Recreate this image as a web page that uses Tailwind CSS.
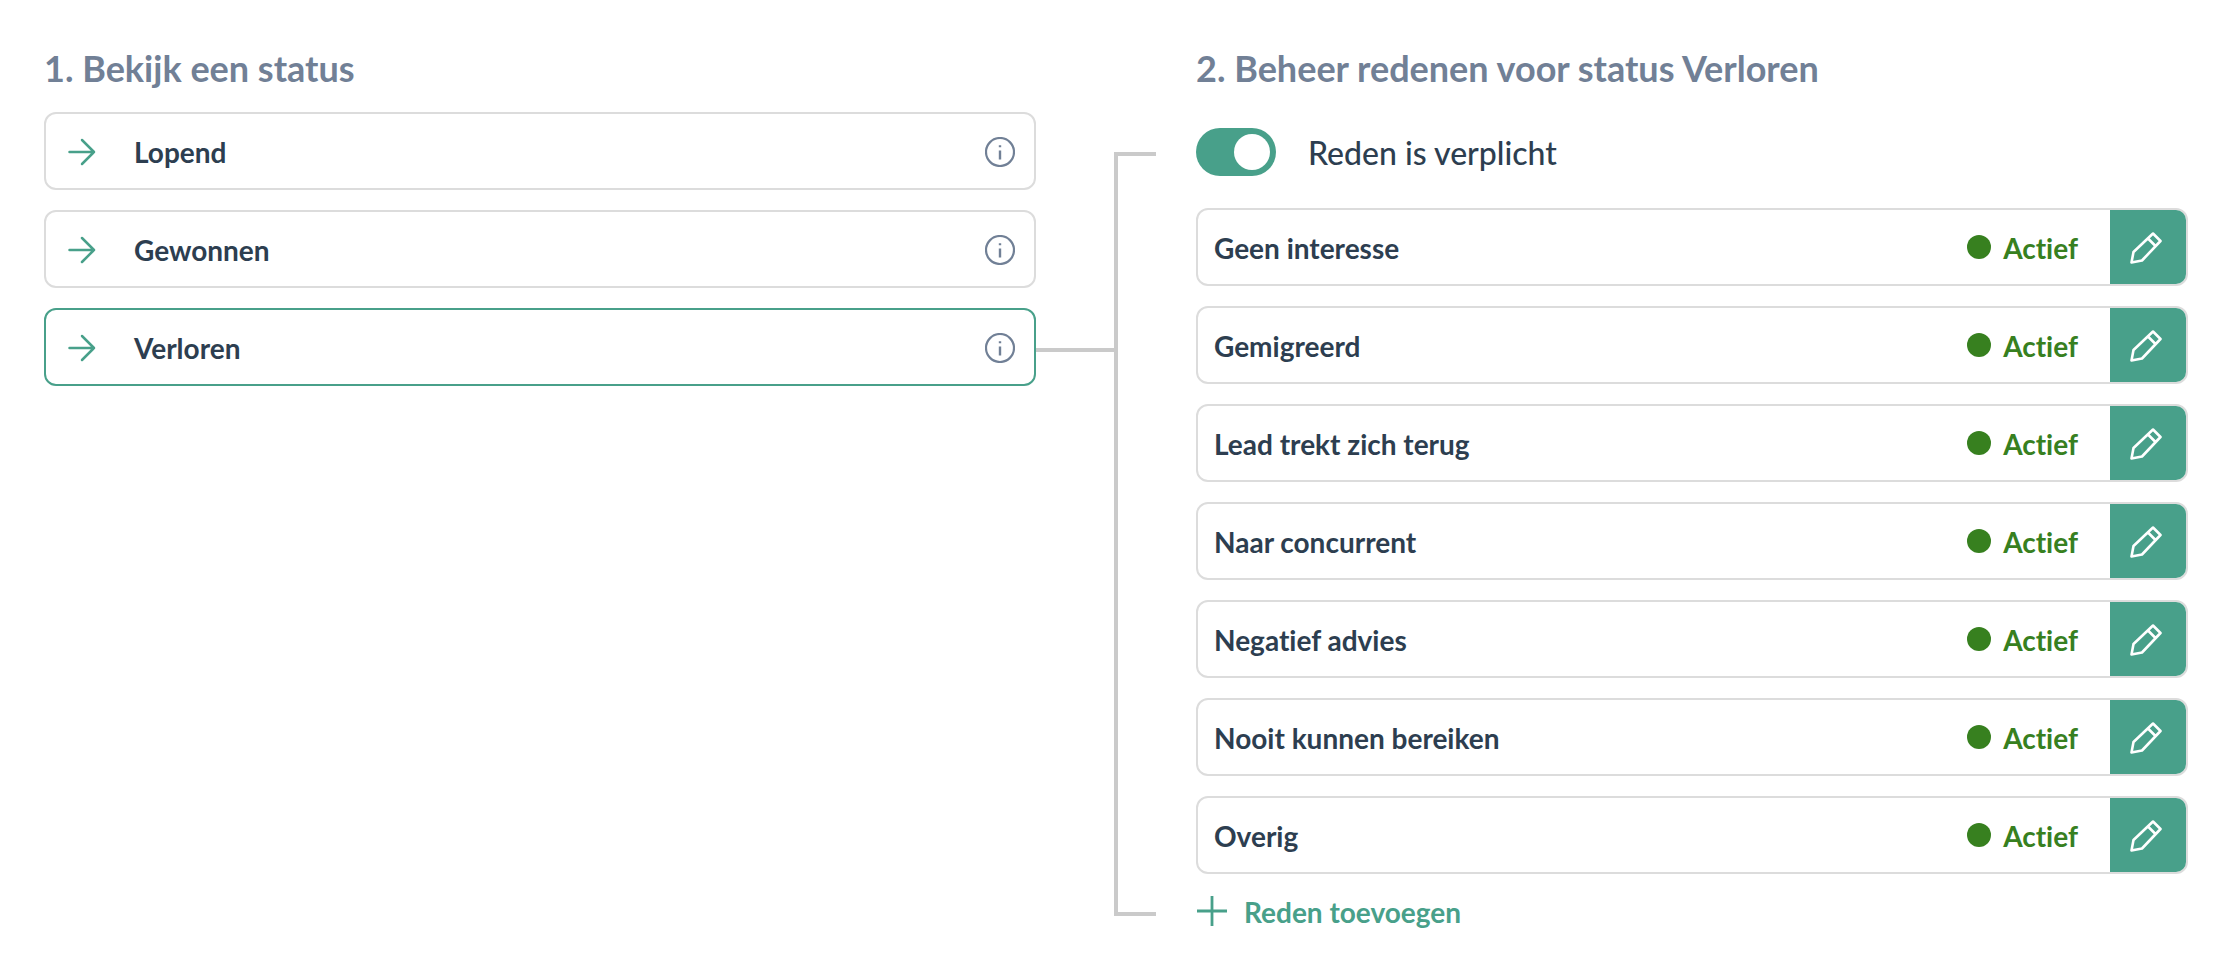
<!DOCTYPE html>
<html lang="nl">
<head>
<meta charset="utf-8">
<meta name="viewport" content="width=device-width, initial-scale=1">
<title>Statussen en redenen</title>
<script src="https://cdn.jsdelivr.net/npm/@tailwindcss/browser@4"></script>
</head>
<body class="bg-white font-[Lato,sans-serif] text-[28px] leading-9 font-bold text-[#2d3e50] [font-variant-ligatures:none]">
<svg class="hidden" aria-hidden="true">
  <symbol id="arrow" viewBox="0 0 28 28"><path d="M1.5 14H26M14 2l12 12-12 12" fill="none" stroke="currentColor" stroke-width="2.5" stroke-linecap="round" stroke-linejoin="round"/></symbol>
  <symbol id="info" viewBox="0 0 30 30"><circle cx="15" cy="15" r="14" fill="none" stroke="currentColor" stroke-width="2.2"/><path d="M15 13.500V22.500M15 8.300v2" fill="none" stroke="currentColor" stroke-width="2.400"/></symbol>
  <symbol id="pencil" viewBox="0 0 32 32"><path d="M1.500 30.500L3.500 20 23 1.500 30.500 9 12 28.500zM18 6.500l7.500 7.500" fill="none" stroke="currentColor" stroke-width="2.600" stroke-linejoin="round"/></symbol>
</svg>
<main class="grid grid-cols-[1fr_160px_1fr] pt-[46px] pl-11 pr-[26px] pb-12">
  <section>
    <h2 class="mb-[22px] text-[36px] leading-11 text-[#718096]">1. Bekijk een status</h2>
    <div class="flex flex-col gap-5">
      <button type="button" class="flex h-[78px] items-center rounded-xl border-2 border-[#dcdcdc] pt-0.5 pl-[22px] pr-[19px] text-left"><svg class="mr-[38px] size-7 text-[#48a08a]"><use href="#arrow"/></svg><span class="flex-1">Lopend</span><svg class="size-[30px] text-[#718096]"><use href="#info"/></svg></button>
      <button type="button" class="flex h-[78px] items-center rounded-xl border-2 border-[#dcdcdc] pt-0.5 pl-[22px] pr-[19px] text-left"><svg class="mr-[38px] size-7 text-[#48a08a]"><use href="#arrow"/></svg><span class="flex-1">Gewonnen</span><svg class="size-[30px] text-[#718096]"><use href="#info"/></svg></button>
      <button type="button" aria-pressed="true" class="flex h-[78px] items-center rounded-xl border-2 border-[#48a08a] pt-0.5 pl-[22px] pr-[19px] text-left"><svg class="mr-[38px] size-7 text-[#48a08a]"><use href="#arrow"/></svg><span class="flex-1">Verloren</span><svg class="size-[30px] text-[#718096]"><use href="#info"/></svg></button>
    </div>
  </section>
  <div class="flex pt-[106px] pb-[14px]" aria-hidden="true">
    <div class="mt-[196px] h-1 w-[78px] bg-[#cacaca]"></div>
    <div class="w-[42px] border-y-4 border-l-4 border-[#cacaca]"></div>
  </div>
  <section>
    <h2 class="text-[36px] leading-11 text-[#718096]">2. Beheer redenen voor status Verloren</h2>
    <label class="mt-[38px] mb-8 flex h-12 items-center gap-8 text-[32px] font-medium">
      <input type="checkbox" role="switch" checked class="h-12 w-20 appearance-none rounded-full bg-gray-300 p-1.5 before:block before:size-9 before:rounded-full before:bg-white checked:bg-[#48a08a] checked:before:ml-8">
      <span class="pt-0.5">Reden is verplicht</span>
    </label>
    <ul class="flex flex-col gap-5">
      <li class="flex h-[78px] items-center overflow-hidden rounded-xl border-2 border-[#dcdcdc] pl-4"><span class="flex-1 pt-0.5">Geen interesse</span><span class="mr-8 flex items-center gap-3 text-[#37801f]"><span class="size-6 rounded-full bg-[#37801f]"></span><span class="pt-0.5">Actief</span></span><button type="button" aria-label="Bewerk Geen interesse" class="flex h-full w-[76px] items-center justify-center bg-[#48a08a] pt-0.5 pr-1 text-white"><svg class="size-8"><use href="#pencil"/></svg></button></li>
      <li class="flex h-[78px] items-center overflow-hidden rounded-xl border-2 border-[#dcdcdc] pl-4"><span class="flex-1 pt-0.5">Gemigreerd</span><span class="mr-8 flex items-center gap-3 text-[#37801f]"><span class="size-6 rounded-full bg-[#37801f]"></span><span class="pt-0.5">Actief</span></span><button type="button" aria-label="Bewerk Gemigreerd" class="flex h-full w-[76px] items-center justify-center bg-[#48a08a] pt-0.5 pr-1 text-white"><svg class="size-8"><use href="#pencil"/></svg></button></li>
      <li class="flex h-[78px] items-center overflow-hidden rounded-xl border-2 border-[#dcdcdc] pl-4"><span class="flex-1 pt-0.5">Lead trekt zich terug</span><span class="mr-8 flex items-center gap-3 text-[#37801f]"><span class="size-6 rounded-full bg-[#37801f]"></span><span class="pt-0.5">Actief</span></span><button type="button" aria-label="Bewerk Lead trekt zich terug" class="flex h-full w-[76px] items-center justify-center bg-[#48a08a] pt-0.5 pr-1 text-white"><svg class="size-8"><use href="#pencil"/></svg></button></li>
      <li class="flex h-[78px] items-center overflow-hidden rounded-xl border-2 border-[#dcdcdc] pl-4"><span class="flex-1 pt-0.5">Naar concurrent</span><span class="mr-8 flex items-center gap-3 text-[#37801f]"><span class="size-6 rounded-full bg-[#37801f]"></span><span class="pt-0.5">Actief</span></span><button type="button" aria-label="Bewerk Naar concurrent" class="flex h-full w-[76px] items-center justify-center bg-[#48a08a] pt-0.5 pr-1 text-white"><svg class="size-8"><use href="#pencil"/></svg></button></li>
      <li class="flex h-[78px] items-center overflow-hidden rounded-xl border-2 border-[#dcdcdc] pl-4"><span class="flex-1 pt-0.5">Negatief advies</span><span class="mr-8 flex items-center gap-3 text-[#37801f]"><span class="size-6 rounded-full bg-[#37801f]"></span><span class="pt-0.5">Actief</span></span><button type="button" aria-label="Bewerk Negatief advies" class="flex h-full w-[76px] items-center justify-center bg-[#48a08a] pt-0.5 pr-1 text-white"><svg class="size-8"><use href="#pencil"/></svg></button></li>
      <li class="flex h-[78px] items-center overflow-hidden rounded-xl border-2 border-[#dcdcdc] pl-4"><span class="flex-1 pt-0.5">Nooit kunnen bereiken</span><span class="mr-8 flex items-center gap-3 text-[#37801f]"><span class="size-6 rounded-full bg-[#37801f]"></span><span class="pt-0.5">Actief</span></span><button type="button" aria-label="Bewerk Nooit kunnen bereiken" class="flex h-full w-[76px] items-center justify-center bg-[#48a08a] pt-0.5 pr-1 text-white"><svg class="size-8"><use href="#pencil"/></svg></button></li>
      <li class="flex h-[78px] items-center overflow-hidden rounded-xl border-2 border-[#dcdcdc] pl-4"><span class="flex-1 pt-0.5">Overig</span><span class="mr-8 flex items-center gap-3 text-[#37801f]"><span class="size-6 rounded-full bg-[#37801f]"></span><span class="pt-0.5">Actief</span></span><button type="button" aria-label="Bewerk Overig" class="flex h-full w-[76px] items-center justify-center bg-[#48a08a] pt-0.5 pr-1 text-white"><svg class="size-8"><use href="#pencil"/></svg></button></li>
    </ul>
    <button type="button" class="mt-[18px] flex h-[38px] items-center gap-4 text-[#48a08a]"><svg class="size-8" viewBox="0 0 32 32" aria-hidden="true"><path d="M1 16H31M16 1v30" fill="none" stroke="currentColor" stroke-width="2.800"/></svg><span class="pt-0.5">Reden toevoegen</span></button>
  </section>
</main>
</body>
</html>
